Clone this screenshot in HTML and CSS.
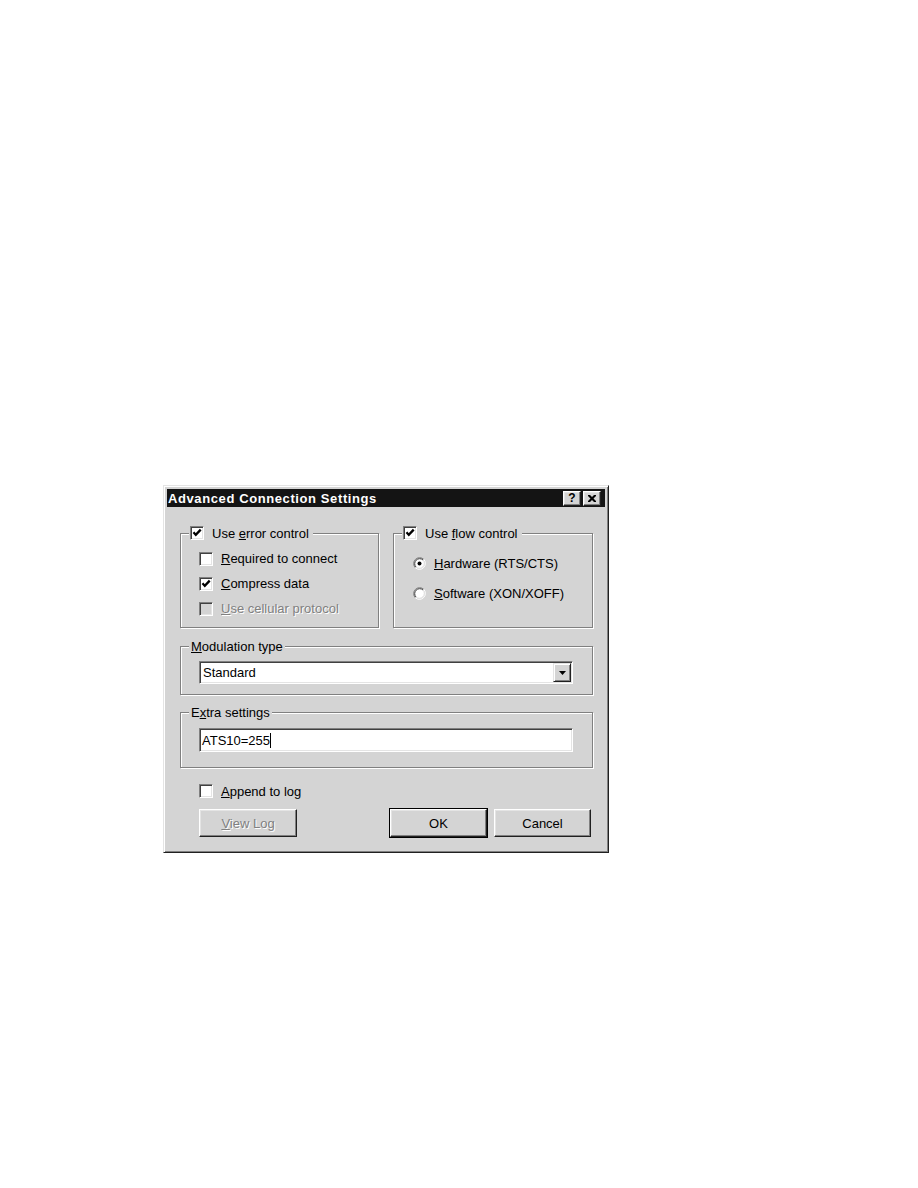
FILE: index.html
```html
<!DOCTYPE html>
<html>
<head>
<meta charset="utf-8">
<title>Advanced Connection Settings</title>
<link rel="stylesheet" href="styles.css">
</head>
<body>
<div class="page">
  <div class="window">
    <div class="titlebar">
      <span class="title">Advanced Connection Settings</span>
      <div class="tbtns">
        <span class="tbtn help">?</span>
        <span class="tbtn close">
          <svg width="8" height="7" viewBox="0 0 8 7"><path d="M0 0h2l2 2 2-2h2v1l-2.5 2.5 2.5 2.5v1h-2l-2-2-2 2h-2v-1l2.5-2.5-2.5-2.5z" fill="#000"/></svg>
        </span>
      </div>
    </div>
    <div class="content">
      <div class="toprow">
        <div class="group g-error">
          <div class="legend cblegend">
            <span class="cb"><svg class="chk" width="10" height="10" viewBox="0 0 10 10"><path d="M1.5 4.3 L3.8 6.9 L8.7 1.6" fill="none" stroke="#000" stroke-width="2.3"/></svg></span>
            <span>Use <u>e</u>rror control</span>
          </div>
          <div class="rows">
            <div class="row"><span class="cb"></span><span><u>R</u>equired to connect</span></div>
            <div class="row"><span class="cb"><svg class="chk" width="10" height="10" viewBox="0 0 10 10"><path d="M1.5 4.3 L3.8 6.9 L8.7 1.6" fill="none" stroke="#000" stroke-width="2.3"/></svg></span><span><u>C</u>ompress data</span></div>
            <div class="row disabled"><span class="cb off"></span><span class="dtext"><u>U</u>se cellular protocol</span></div>
          </div>
        </div>
        <div class="group g-flow">
          <div class="legend cblegend">
            <span class="cb"><svg class="chk" width="10" height="10" viewBox="0 0 10 10"><path d="M1.5 4.3 L3.8 6.9 L8.7 1.6" fill="none" stroke="#000" stroke-width="2.3"/></svg></span>
            <span>Use <u>f</u>low control</span>
          </div>
          <div class="rows radios">
            <div class="row">
              <svg class="radio" width="13" height="13" viewBox="0 0 13 13"><circle cx="6.5" cy="6.5" r="5" fill="#fff"/><path d="M10.74 2.26A6 6 0 0 0 2.26 10.74" fill="none" stroke="#808080"/><path d="M10.03 2.97A5 5 0 0 0 2.97 10.03" fill="none" stroke="#404040"/><path d="M10.74 2.26A6 6 0 0 1 2.26 10.74" fill="none" stroke="#fff"/><path d="M10.03 2.97A5 5 0 0 1 2.97 10.03" fill="none" stroke="#dfdfdf"/><circle cx="6.5" cy="6.5" r="2" fill="#000"/></svg>
              <span><u>H</u>ardware (RTS/CTS)</span>
            </div>
            <div class="row">
              <svg class="radio" width="13" height="13" viewBox="0 0 13 13"><circle cx="6.5" cy="6.5" r="5" fill="#fff"/><path d="M10.74 2.26A6 6 0 0 0 2.26 10.74" fill="none" stroke="#808080"/><path d="M10.03 2.97A5 5 0 0 0 2.97 10.03" fill="none" stroke="#404040"/><path d="M10.74 2.26A6 6 0 0 1 2.26 10.74" fill="none" stroke="#fff"/><path d="M10.03 2.97A5 5 0 0 1 2.97 10.03" fill="none" stroke="#dfdfdf"/></svg>
              <span><u>S</u>oftware (XON/XOFF)</span>
            </div>
          </div>
        </div>
      </div>

      <div class="group g-mod">
        <div class="legend"><span><u>M</u>odulation type</span></div>
        <div class="combo">
          <span class="combotext">Standard</span>
          <span class="combobtn"><svg width="7" height="4" viewBox="0 0 7 4"><path d="M0 0h7l-3.5 4z" fill="#000"/></svg></span>
        </div>
      </div>

      <div class="group g-extra">
        <div class="legend"><span>E<u>x</u>tra settings</span></div>
        <div class="edit"><span>ATS10=255</span><span class="caret"></span></div>
      </div>

      <div class="row append"><span class="cb"></span><span><u>A</u>ppend to log</span></div>

      <div class="btnrow">
        <span class="btn disabled"><span class="dtext"><u>V</u>iew Log</span></span>
        <span class="spacer"></span>
        <span class="btn default">OK</span>
        <span class="btn">Cancel</span>
      </div>
    </div>
  </div>
</div>
</body>
</html>
```

FILE: styles.css
```css
:root {
  --face: #d4d4d4;
  --light: #e4e4e4;
  --shadow: #808080;
  --dark: #404040;
}

html, body {
  margin: 0;
  padding: 0;
  background: #fff;
}

body {
  font-family: "Liberation Sans", Arial, sans-serif;
  font-size: 13px;
  color: #000;
}

.page {
  padding: 485px 0 0 163px;
}

.window {
  width: 446px;
  height: 368px;
  box-sizing: border-box;
  background: var(--face);
  border: 1px solid;
  border-color: var(--light) #202020 #202020 var(--light);
  box-shadow: inset 1px 1px #fff, inset -1px -1px var(--shadow);
  padding: 3px;
  display: flex;
  flex-direction: column;
}

.titlebar {
  height: 18px;
  flex: none;
  background: #141414;
  color: #fff;
  display: flex;
  align-items: center;
  padding-left: 1px;
}

.title {
  flex: 1;
  font-weight: bold;
  font-size: 13px;
  letter-spacing: 0.6px;
  white-space: nowrap;
}

.tbtns {
  display: flex;
  gap: 2px;
  margin-right: 4px;
}

.tbtn {
  width: 18px;
  height: 15px;
  box-sizing: border-box;
  background: var(--face);
  border: 1px solid;
  border-color: #fff #202020 #202020 #fff;
  box-shadow: inset -1px -1px var(--shadow), inset 1px 1px var(--light);
  display: flex;
  align-items: center;
  justify-content: center;
  color: #000;
}

.tbtn.help {
  font-weight: bold;
  font-size: 12px;
  line-height: 1;
}

.content {
  padding: 26px 12px 0 13px;
  display: flex;
  flex-direction: column;
}

.toprow {
  display: flex;
  gap: 14px;
}

.group {
  border: 1px solid var(--shadow);
  box-shadow: inset 1px 1px #fff, 1px 1px #fff;
  box-sizing: border-box;
  display: flex;
  flex-direction: column;
}

.legend {
  display: flex;
  align-items: center;
  width: max-content;
  height: 16px;
  margin: -9px 0 0 8px;
  padding: 0 2px;
  background: var(--face);
  white-space: nowrap;
}

.cblegend {
  gap: 8px;
  padding: 0 4px 0 1px;
}

.g-error {
  width: 199px;
  height: 95px;
}

.g-flow {
  width: 200px;
  height: 95px;
}

.rows {
  display: flex;
  flex-direction: column;
  padding: 5px 0 0 18px;
}

.radios {
  padding: 7px 0 0 19px;
}

.row {
  display: flex;
  align-items: center;
  gap: 8px;
  height: 25px;
  white-space: nowrap;
}

.radios .row {
  height: 30px;
}

.cb {
  width: 14px;
  height: 14px;
  box-sizing: border-box;
  flex: none;
  background: #fff;
  border: 1px solid;
  border-color: var(--shadow) #fff #fff var(--shadow);
  box-shadow: inset 1px 1px var(--dark), inset -1px -1px var(--light);
  display: flex;
  align-items: center;
  justify-content: center;
}

.cb.off {
  background: var(--face);
}

.radio {
  flex: none;
  display: block;
}

.dtext {
  color: var(--shadow);
  text-shadow: 1px 1px 0 #fff;
}

.g-mod {
  margin-top: 18px;
  height: 49px;
}

.combo {
  margin: 7px 19px 0 18px;
  height: 23px;
  box-sizing: border-box;
  background: #fff;
  border: 1px solid;
  border-color: var(--shadow) #fff #fff var(--shadow);
  box-shadow: inset 1px 1px var(--dark), inset -1px -1px var(--light);
  padding: 1px;
  display: flex;
  align-items: stretch;
}

.combotext {
  flex: 1;
  display: flex;
  align-items: center;
  padding-left: 2px;
}

.combobtn {
  width: 18px;
  box-sizing: border-box;
  background: var(--face);
  border: 1px solid;
  border-color: var(--light) #202020 #202020 var(--light);
  box-shadow: inset 1px 1px #fff, inset -1px -1px var(--shadow);
  display: flex;
  align-items: center;
  justify-content: center;
}

.g-extra {
  margin-top: 17px;
  height: 56px;
}

.edit {
  margin: 8px 19px 0 18px;
  height: 24px;
  box-sizing: border-box;
  background: #fff;
  border: 1px solid;
  border-color: var(--shadow) #fff #fff var(--shadow);
  box-shadow: inset 1px 1px var(--dark), inset -1px -1px var(--light);
  padding: 0 2px;
  display: flex;
  align-items: center;
}

.caret {
  width: 1px;
  height: 15px;
  background: #000;
}

.append {
  margin-top: 13px;
  height: 20px;
  padding-left: 19px;
}

.btnrow {
  display: flex;
  margin-top: 8px;
  padding: 0 2px 0 19px;
  gap: 7px;
}

.spacer {
  flex: 1;
}

.btn {
  width: 97px;
  height: 28px;
  box-sizing: border-box;
  background: var(--face);
  border: 1px solid;
  border-color: #fff #202020 #202020 #fff;
  box-shadow: inset -1px -1px var(--shadow), inset 1px 1px var(--light);
  display: flex;
  align-items: center;
  justify-content: center;
}

.btn.disabled {
  width: 98px;
}

.btn.default {
  outline: 1px solid #000;
}
```
